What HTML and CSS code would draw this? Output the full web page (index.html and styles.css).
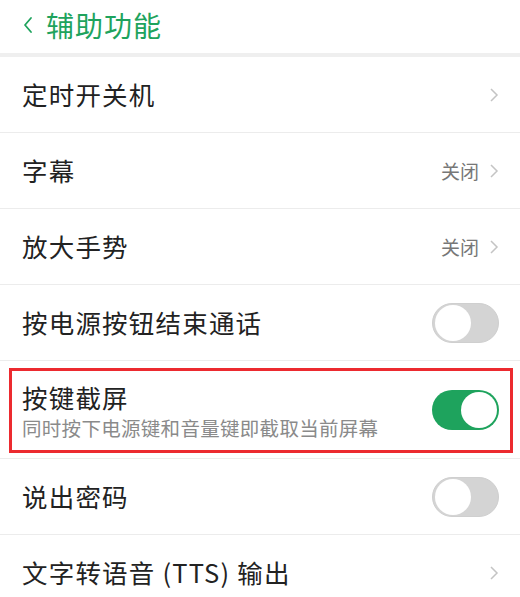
FILE: index.html
```html
<!DOCTYPE html>
<html lang="zh-CN">
<head>
<meta charset="utf-8">
<link rel="stylesheet" href="styles.css">
</head>
<body>
<div class="screen">
  <header class="topbar">
    <svg class="back" width="12" height="18" viewBox="0 0 12 18"><path d="M9 2 L3 9 L9 16" fill="none" stroke="#1ea35d" stroke-width="1.8" stroke-linecap="round" stroke-linejoin="round"/></svg>
    <span class="title">辅助功能</span>
  </header>
  <ul class="list">
    <li class="row">
      <span class="label">定时开关机</span>
      <span class="right"><svg class="chev" width="10" height="16" viewBox="0 0 10 16"><path d="M2 2 L8 8 L2 14" fill="none" stroke="#c4c4c4" stroke-width="1.5"/></svg></span>
    </li>
    <li class="row">
      <span class="label">字幕</span>
      <span class="right"><span class="value">关闭</span><svg class="chev" width="10" height="16" viewBox="0 0 10 16"><path d="M2 2 L8 8 L2 14" fill="none" stroke="#c4c4c4" stroke-width="1.5"/></svg></span>
    </li>
    <li class="row">
      <span class="label">放大手势</span>
      <span class="right"><span class="value">关闭</span><svg class="chev" width="10" height="16" viewBox="0 0 10 16"><path d="M2 2 L8 8 L2 14" fill="none" stroke="#c4c4c4" stroke-width="1.5"/></svg></span>
    </li>
    <li class="row">
      <span class="label">按电源按钮结束通话</span>
      <span class="switch off"><span class="knob"></span></span>
    </li>
    <li class="row tall">
      <span class="texts">
        <span class="label">按键截屏</span>
        <span class="sub">同时按下电源键和音量键即截取当前屏幕</span>
      </span>
      <span class="switch on"><span class="knob"></span></span>
      <span class="highlight"></span>
    </li>
    <li class="row">
      <span class="label">说出密码</span>
      <span class="switch off"><span class="knob"></span></span>
    </li>
    <li class="row">
      <span class="label">文字转语音 (TTS) 输出</span>
      <span class="right"><svg class="chev" width="10" height="16" viewBox="0 0 10 16"><path d="M2 2 L8 8 L2 14" fill="none" stroke="#c4c4c4" stroke-width="1.5"/></svg></span>
    </li>
  </ul>
</div>
</body>
</html>
```
FILE: styles.css
```css
* { box-sizing: border-box; }
html, body { margin: 0; padding: 0; background: #fff; }
body {
  font-family: "Noto Sans CJK SC", "Noto Sans", sans-serif;
  width: 520px;
  height: 597px;
  overflow: hidden;
}
.screen { width: 520px; }
.topbar {
  height: 57px;
  display: flex;
  align-items: center;
  padding: 0 0 4px 22px;
  border-bottom: 4px solid #efefef;
  gap: 12px;
}
.back { display: block; }
.title {
  color: #1ea35d;
  font-size: 28px;
  line-height: 1;
  letter-spacing: 1px;
}
.list { list-style: none; margin: 0; padding: 0; }
.row {
  position: relative;
  height: 76px;
  border-bottom: 1px solid #ececec;
  display: flex;
  align-items: center;
  justify-content: space-between;
  padding: 0 21px 0 22px;
}
.row.tall { height: 98px; }
.label {
  font-size: 25.5px;
  color: #222;
  line-height: 1.2;
  letter-spacing: 1.2px;
}
.texts { display: flex; flex-direction: column; gap: 4px; padding-top: 2px; }
.sub { font-size: 19.5px; color: #8a8a8a; line-height: 1.2; letter-spacing: 0.3px; }
.right { display: flex; align-items: center; gap: 10px; }
.value { font-size: 19px; color: #777; }
.chev { display: block; }
.switch {
  width: 67px;
  height: 40px;
  border-radius: 20px;
  position: relative;
  flex: none;
}
.switch.off { background: #d4d4d4; border: 1px solid #cfcfcf; }
.switch.on { background: #1ea35d; }
.knob {
  position: absolute;
  top: 2px;
  width: 36px;
  height: 36px;
  border-radius: 50%;
  background: #fff;
}
.switch.off .knob { left: 2px; top: 1px; }
.switch.on .knob { right: 2px; }
.highlight {
  position: absolute;
  left: 9px;
  right: 7px;
  top: 7px;
  bottom: 5px;
  border: 3px solid #ec2a2f;
  pointer-events: none;
}
```
